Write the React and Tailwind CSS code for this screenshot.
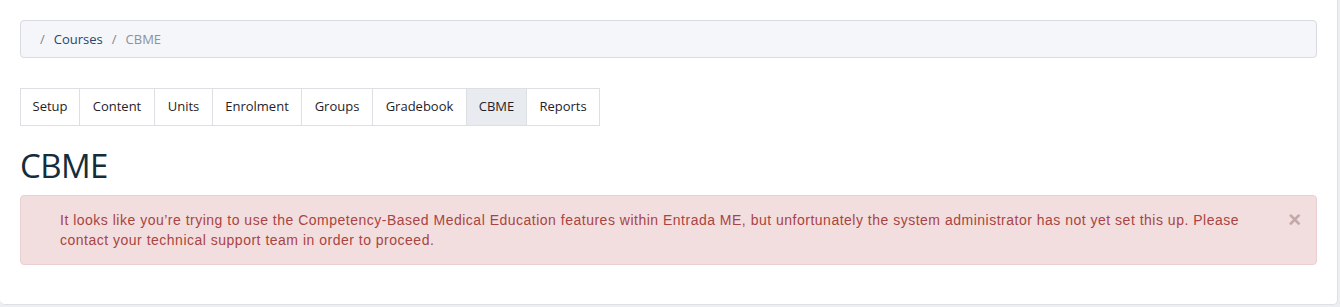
import React from "react";

const tabs = [
  ["Setup", "w-[60px]"],
  ["Content", "w-[76px]"],
  ["Units", "w-[59px]"],
  ["Enrolment", "w-[90px]"],
  ["Groups", "w-[72px]"],
  ["Gradebook", "w-[95px]"],
  ["CBME", "w-[61px]"],
  ["Reports", "w-[74px]"],
];

export default function App() {
  return (
    <div className="w-[1340px] h-[307px] bg-[#eceef2] overflow-hidden">
      <div className="w-[1338px] h-[305px] bg-white border-r border-b border-[#dde0e5] rounded-br-[5px] rounded-bl-[5px] px-5 pt-5">
        <div
          className="h-[38px] bg-[#f5f6f9] border border-[#d8dbe2] rounded-[4px] flex items-center pl-[19px] pt-[1px] text-[13px] gap-[9px]"
          style={{ fontFamily: '"Open Sans", sans-serif' }}
        >
          <span className="text-[#7c8591]">/</span>
          <span className="text-[#27466f]">Courses</span>
          <span className="text-[#7c8591]">/</span>
          <span className="text-[#8a929c]">CBME</span>
        </div>

        <div className="mt-[30px] flex" style={{ fontFamily: '"Open Sans", sans-serif' }}>
          {tabs.map(([t, w], i) => (
            <div
              key={t}
              className={
                "h-[38px] flex items-center justify-center text-[13px] text-[#1f2328] border border-[#dcdfe3] " +
                w +
                (i > 0 ? " -ml-px " : " ") +
                (t === "CBME" ? "bg-[#e8ebf0]" : "bg-white")
              }
            >
              {t}
            </div>
          ))}
        </div>

        <h1
          className="mt-[20px] text-[33px] leading-[40px] text-[#152d3a] tracking-[-0.6px]"
          style={{ fontFamily: '"Open Sans", sans-serif' }}
        >
          CBME
        </h1>

        <div
          className="relative mt-[9px] bg-[#f2dede] border border-[#ebd0d3] rounded-[4px] pl-[39px] pr-[60px] py-[14px] text-[14px] tracking-[0.5px] leading-[20px] text-[#a94442]"
          style={{ fontFamily: '"Liberation Sans", Arial, sans-serif' }}
        >
          It looks like you’re trying to use the Competency-Based Medical Education features within Entrada ME, but unfortunately the system administrator has not yet set this up. Please contact your technical support team in order to proceed.
          <span className="absolute right-[15px] top-[13px] text-[22px] leading-[22px] font-bold tracking-normal text-[#c0a9aa]">×</span>
        </div>
      </div>
    </div>
  );
}
